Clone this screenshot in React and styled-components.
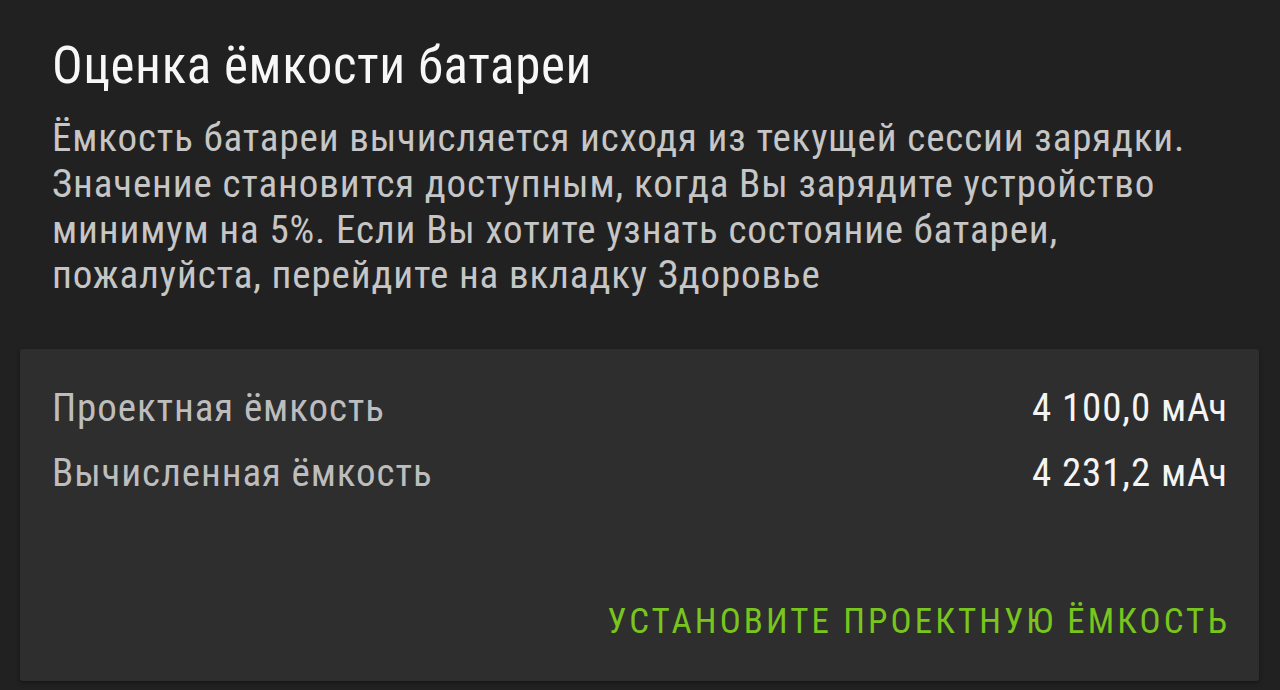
import React from "react";
import styled, { createGlobalStyle } from "styled-components";

const GlobalStyle = createGlobalStyle`
  html, body {
    margin: 0;
    padding: 0;
    background: #212121;
  }
  body {
    font-family: "Roboto Condensed", Roboto, "Liberation Sans", sans-serif;
    font-stretch: 75%;
    -webkit-font-smoothing: antialiased;
  }
`;

const Page = styled.main`
  width: 1280px;
  height: 690px;
  box-sizing: border-box;
  background: #212121;
  padding: 36px 21px 0 20px;
  display: flex;
  flex-direction: column;
  overflow: hidden;
`;

const Header = styled.header`
  padding: 0 32px;
  display: flex;
  flex-direction: column;
  gap: 20px;
`;

const Title = styled.h1`
  margin: 0;
  font-size: 51px;
  line-height: 60px;
  letter-spacing: 0.6px;
  font-weight: 400;
  color: #f7f7f7;
  white-space: nowrap;
`;

const Description = styled.p`
  margin: 0;
  font-size: 39px;
  line-height: 45.8px;
  letter-spacing: 0.87px;
  font-weight: 400;
  color: #c6c6c6;
  white-space: nowrap;
`;

const Card = styled.section`
  margin-top: 50px;
  background: #2e2e2e;
  border-radius: 3px;
  box-shadow: 0 2px 4px rgba(0, 0, 0, 0.35);
  padding: 27px 32px 39px;
  display: flex;
  flex-direction: column;
`;

const Row = styled.div`
  display: flex;
  justify-content: space-between;
  align-items: baseline;
  font-size: 39px;
  line-height: 64.5px;
  letter-spacing: 0.9px;
`;

const Label = styled.span`
  color: #bdbdbd;
`;

const Value = styled.span`
  color: #f4f4f4;
  margin-right: -0.9px;
`;

const Actions = styled.div`
  margin-top: 97px;
  display: flex;
  justify-content: flex-end;
`;

const TextButton = styled.button`
  border: 0;
  background: none;
  padding: 0;
  margin-right: -3.1px;
  font: inherit;
  font-stretch: 75%;
  font-size: 35px;
  line-height: 40px;
  letter-spacing: 3.1px;
  text-transform: uppercase;
  color: #78c51e;
  cursor: pointer;
`;

const rows = [
  { label: "Проектная ёмкость", value: "4 100,0 мАч" },
  { label: "Вычисленная ёмкость", value: "4 231,2 мАч" },
];

const lines = [
  "Ёмкость батареи вычисляется исходя из текущей сессии зарядки.",
  "Значение становится доступным, когда Вы зарядите устройство",
  "минимум на 5%. Если Вы хотите узнать состояние батареи,",
  "пожалуйста, перейдите на вкладку Здоровье",
];

export default function App() {
  return (
    <>
      <GlobalStyle />
      <Page>
        <Header>
          <Title>Оценка ёмкости батареи</Title>
          <Description>
            {lines.map((l, i) => (
              <React.Fragment key={i}>
                {l}
                {i < lines.length - 1 && <br />}
              </React.Fragment>
            ))}
          </Description>
        </Header>
        <Card>
          {rows.map((r) => (
            <Row key={r.label}>
              <Label>{r.label}</Label>
              <Value>{r.value}</Value>
            </Row>
          ))}
          <Actions>
            <TextButton>Установите проектную ёмкость</TextButton>
          </Actions>
        </Card>
      </Page>
    </>
  );
}
